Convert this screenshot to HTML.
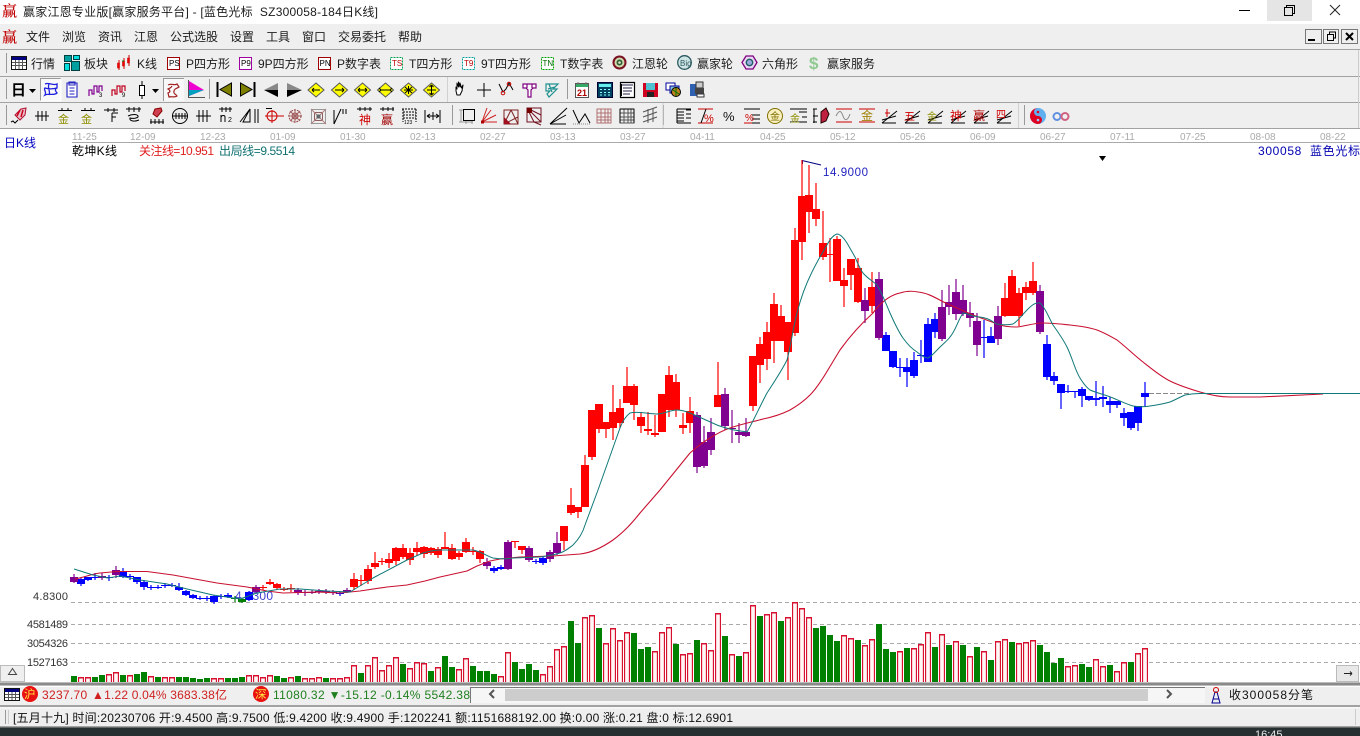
<!DOCTYPE html>
<html><head><meta charset="utf-8"><title>赢家江恩</title>
<style>
html,body{margin:0;padding:0;background:#fff;overflow:hidden}
svg{display:block}
text{font-family:"Liberation Sans","Noto Sans CJK SC",sans-serif;font-size:12px;fill:#222}
.m{fill:#1c1c1c}
.d{font-size:10px;fill:#aaa}
.y{font-size:11px;fill:#333}
.t{font-size:8px;fill:#000}
.l{font-family:"Noto Serif CJK SC",serif;font-size:15px;fill:#c00000;font-weight:600}
</style></head><body>
<svg width="1360" height="736" viewBox="0 0 1360 736" xmlns="http://www.w3.org/2000/svg">
<rect width="1360" height="736" fill="#fff"/>
<!-- title -->
<text x="2" y="16" class="l">赢</text>
<text x="23" y="16" class="m" textLength="355">赢家江恩专业版[赢家服务平台] - [蓝色光标&#160;&#160;SZ300058-184日K线]</text>
<rect x="1267" y="0" width="45" height="21" fill="#e5e5e5"/>
<path d="M1239 10.500H1250" stroke="#000" fill="none"/>
<path d="M1284.500 7.500h8v8h-8zM1286.500 7.500V5.500h8v8h-2" stroke="#000" fill="none"/>
<path d="M1330 5l10 10M1340 5l-10 10" stroke="#222" fill="none"/>
<!-- bars -->
<rect y="24" width="1360" height="105" fill="#efefef"/>
<path d="M0 49.500H1360M0 76.500H1360M0 102.500H1360M0 128.500H1360" stroke="#a2a2a2" fill="none"/>
<path d="M1358.500 50V128" stroke="#ccc"/>
<!-- menu -->
<text x="2" y="42" class="l">赢</text>
<text x="26" y="41" class="m">文件</text><text x="62" y="41" class="m">浏览</text><text x="98" y="41" class="m">资讯</text><text x="134" y="41" class="m">江恩</text><text x="170" y="41" class="m">公式选股</text><text x="230" y="41" class="m">设置</text><text x="266" y="41" class="m">工具</text><text x="302" y="41" class="m">窗口</text><text x="338" y="41" class="m">交易委托</text><text x="398" y="41" class="m">帮助</text>
<!-- mdi buttons -->
<g fill="#efefef" stroke="#777"><rect x="1305.500" y="29.500" width="16" height="14"/><rect x="1323.500" y="29.500" width="15" height="14"/><rect x="1341.500" y="29.500" width="16" height="14"/></g>
<path d="M1308 40h7" stroke="#000" stroke-width="2"/>
<path d="M1327.500 34.500h6v6h-6zM1329.500 34.500v-2.500h6v6h-2" stroke="#000" fill="none"/>
<path d="M1346 33l7 7M1353 33l-7 7" stroke="#000" stroke-width="2"/>
<!-- toolbar separators -->
<path d="M6.500 53V73M6.500 79V99M6.500 105V125M209.500 79V99M452.500 105V125M567.500 79V99M663.500 105V125M1024.500 105V125" stroke="#999"/>
<path d="M447.500 77V102M663 103V128M1018.500 103V128" stroke="#d0d0d0"/>
<!-- toolbar 1 -->
<rect x="11.500" y="56.500" width="15" height="13" fill="#fff" stroke="#111"/><rect x="12" y="57" width="14" height="3" fill="#000080"/>
<path d="M12 62.500H26M12 65.500H26M15.500 60V69M19 60V69M22.500 60V69" stroke="#555"/>
<text x="31" y="68" class="m">行情</text>
<g fill="#00a0a0" stroke="#004040"><rect x="64.500" y="55.500" width="7" height="6"/><rect x="73.500" y="55.500" width="6" height="4" fill="#00e0e0"/><rect x="64.500" y="63.500" width="5" height="7" fill="#00e0e0"/><rect x="71.500" y="61.500" width="8" height="9"/></g>
<text x="84" y="68" class="m">板块</text>
<path d="M119 60V70M124 58V69M129 55V66" stroke="#c00" fill="none"/><path d="M117.500 63h2v5h-2zM122.500 61h2v5h-2zM127.500 58h2v5h-2z" fill="#e00" stroke="#c00" stroke-width=".6"/><path d="M122 61h2" stroke="#080"/>
<text x="137" y="68" class="m">K线</text>
<rect x="167.500" y="57.500" width="12" height="12" fill="#fff" stroke="#a00000"/><text x="169" y="66" class="t">PS</text>
<text x="186" y="68" class="m">P四方形</text>
<rect x="239.500" y="57.500" width="12" height="12" fill="#fff" stroke="#a000a0"/><text x="241" y="66" class="t">P9</text>
<text x="258" y="68" class="m">9P四方形</text>
<rect x="318.500" y="57.500" width="12" height="12" fill="#fff" stroke="#a00000"/><text x="319.500" y="66" class="t">PN</text>
<text x="337" y="68" class="m">P数字表</text>
<rect x="390.500" y="57.500" width="12" height="12" fill="#fff" stroke="#00a050" stroke-dasharray="2 1"/><text x="392" y="66" class="t" style="fill:#b00">TS</text>
<text x="409" y="68" class="m">T四方形</text>
<rect x="462.500" y="57.500" width="12" height="12" fill="#fff" stroke="#00a0a0" stroke-dasharray="2 1"/><text x="464" y="66" class="t" style="fill:#b00">T9</text>
<text x="481" y="68" class="m">9T四方形</text>
<rect x="541.500" y="57.500" width="12" height="12" fill="#fff" stroke="#00a000" stroke-dasharray="2 1"/><text x="542.500" y="66" class="t" style="fill:#060">TN</text>
<text x="560" y="68" class="m">T数字表</text>
<circle cx="619.500" cy="62.500" r="7" fill="#7a1020"/><circle cx="619.500" cy="62.500" r="5" fill="#d0d8b0"/><circle cx="619.500" cy="62.500" r="3" fill="#306030"/><circle cx="619.500" cy="62.500" r="1.300" fill="#e0e0d0"/>
<text x="632" y="68" class="m">江恩轮</text>
<circle cx="684.500" cy="62.500" r="6.800" fill="#cfe4e4" stroke="#2a5a60" stroke-width="1.300"/><text x="680" y="66" style="font-size:8px;fill:#2a5a60">Big</text>
<text x="697" y="68" class="m">赢家轮</text>
<path d="M746 56h7l4 6.500-4 6.500h-7l-4-6.500z" fill="#e8d8f4" stroke="#800080" stroke-width="1.300"/><circle cx="749.500" cy="62.500" r="3.200" fill="#9ad" stroke="#206060" stroke-width="1.400"/>
<text x="762" y="68" class="m">六角形</text>
<text x="809" y="69" style="font-size:17px;font-weight:bold;fill:#8fc98f">$</text>
<text x="827" y="68" class="m">赢家服务</text>
<!-- toolbar 2 -->
<text x="11" y="95" style="font-size:15px;font-weight:bold;fill:#000">日</text>
<path d="M29 89h7l-3.500 4z" fill="#000"/>
<rect x="40" y="78" width="21" height="23" fill="#f8f8f8"/><path d="M40.500 101V78.500H61" stroke="#999" fill="none"/><path d="M61 78.500V101H40" stroke="#fff" fill="none"/>
<path d="M45 84c4-2 8 2 12 0v4c-3 1-1 4 0 5-3 3-8 0-12 2 2-3-2-6 0-7 3 1 8 1 12 0M49 84c-2 4 2 8 0 11" stroke="#2020e0" fill="none" stroke-width="1.300"/>
<path d="M67 83h10v14h-10zM69 82h6v3h-6zM69.500 88h5M69.500 91h5M69.500 94h5" stroke="#2020c0" fill="#fff" stroke-width="1.100"/>
<path d="M89 96v-6h3v4h2v-8h3v6h2v-6h3v5" stroke="#800090" fill="none" stroke-width="1.200"/><text x="99" y="97" style="font-size:6px;fill:#000">3</text>
<path d="M112 96v-6h3v4h2v-8h3v6h2v-6h3v5" stroke="#c00020" fill="none" stroke-width="1.200"/><text x="122" y="97" style="font-size:6px;fill:#000">9</text>
<path d="M142 81V99" stroke="#000"/><rect x="139.500" y="85.500" width="5" height="10" fill="#fff" stroke="#000"/>
<path d="M152 89h7l-3.500 4z" fill="#000"/>
<rect x="163" y="78" width="21" height="23" fill="#f8f8f8"/><path d="M163.500 101V78.500H184" stroke="#999" fill="none"/>
<path d="M168 85c4-2 6 1 9-1l2 3c-3 2-4 1-5 4s2 3 3 5c-3 2-5 0-8 1l-1-4c3-1 2-3 0-4 2-1 3-1 4-3" stroke="#a02020" fill="none" stroke-width="1.200"/>
<path d="M189 81V96L204 90z" fill="#f000d0"/><path d="M189 90L204 90 189 96z" fill="#00a0c0"/><path d="M188 97.500H205M188.500 80V98" stroke="#555" fill="none"/>
<!-- nav -->
<path d="M217.500 82V97" stroke="#000" stroke-width="2"/><path d="M231.500 83V96L220 89.500z" fill="#808000" stroke="#000"/>
<path d="M254.500 82V97" stroke="#000" stroke-width="2"/><path d="M240.500 83V96L252 89.500z" fill="#808000" stroke="#000"/>
<path d="M278 83V90L264 90z" fill="#888"/><path d="M278 97V90L264 90z" fill="#000"/>
<path d="M287 83V90L302 90z" fill="#888"/><path d="M287 97V90L302 90z" fill="#000"/>
<g fill="#ffff00" stroke="#555"><path d="M316 83l8 7-8 7-8-7z"/><path d="M339.500 83l8 7-8 7-8-7z"/><path d="M362.500 83l8 7-8 7-8-7z"/><path d="M385.500 83l8 7-8 7-8-7z"/><path d="M408.500 83l8 7-8 7-8-7z"/><path d="M431.500 83l8 7-8 7-8-7z"/></g>
<g stroke="#000" fill="none"><path d="M312 90h8M312 90l2-2M312 90l2 2"/><path d="M335 90h9M344 90l-2-2M344 90l-2 2"/><path d="M358 90h9M358 90l2-2M358 90l2 2M367 90l-2-2M367 90l-2 2"/><path d="M381 90h9M381 90l-2-2M381 90l-2 2M390 90l2-2M390 90l2 2"/><path d="M404 90h9M408.500 86v8M405 87l7 6M412 87l-7 6"/><path d="M427 90h9M431.500 85v10M431.500 85l-2 2M431.500 85l2 2M431.500 95l-2-2M431.500 95l2-2"/></g>
<path d="M456 91v-4l1 2v-6l1.500 4v-5l1.500 5v-4l1.500 5 1.500-3-1 6-2 4h-3z" fill="#fff" stroke="#000" stroke-linejoin="round"/>
<path d="M484 83V97M477 90H491" stroke="#000" fill="none"/>
<path d="M499 84l4 8 3-3 3-6 4 7" stroke="#000" fill="none"/><circle cx="503" cy="93" r="1.800" fill="none" stroke="#c00"/><circle cx="509" cy="84" r="1.800" fill="none" stroke="#c00"/>
<path d="M523 84h13v4h-3l-2 2v7h-3v-7l-2-2h-3zM527 84v4M532 84v4" fill="#fff" stroke="#800080" stroke-width="1.200"/>
<path d="M546 84h12l-5 5h4l-8 8-2-3 3-3h-4zM549 84l3 8M555 87l-7 2" fill="none" stroke="#209090" stroke-width="1.200"/>
<!-- tool -->
<rect x="575.500" y="83.500" width="13" height="14" fill="#fff" stroke="#555"/><rect x="576" y="84" width="12" height="3" fill="#3a6"/><path d="M578 82v3M586 82v3" stroke="#777"/><text x="577" y="96" style="font-size:9px;fill:#b00000;font-weight:bold">21</text>
<rect x="597.500" y="82.500" width="15" height="15" fill="#004060" stroke="#003"/><rect x="599" y="84" width="12" height="3" fill="#6ee"/><path d="M600 89.500h2M604 89.500h2M608 89.500h2M600 92.500h2M604 92.500h2M608 92.500h2M600 95h2M604 95h2M608 95h2" stroke="#8ff"/>
<path d="M620.500 82.500h14v15h-14z" fill="#fff" stroke="#000" stroke-width="1.200"/><path d="M622 85h11M623 88h9M623 91h9M623 94h7" stroke="#224" /><path d="M620 84h2v12h-2" fill="#000"/>
<rect x="643" y="83" width="15" height="14" fill="#d00020"/><rect x="646" y="83" width="9" height="7" fill="#50c0d0"/><rect x="647" y="92" width="7" height="5" fill="#222"/>
<rect x="666" y="83" width="9" height="7" fill="#fff" stroke="#009"/><rect x="670" y="86" width="9" height="7" fill="#80c0e0" stroke="#009"/><circle cx="676" cy="92" r="4.500" fill="#c08020" stroke="#000"/><path d="M673 90l6 4M676 88v8" stroke="#070"/>
<rect x="690" y="84" width="9" height="12" fill="#3060b0"/><rect x="696" y="82" width="7" height="6" fill="#ccc" stroke="#333"/><rect x="695" y="88" width="9" height="6" fill="#444"/><rect x="697" y="94" width="7" height="3" fill="#fff" stroke="#333"/>
<!-- toolbar 3 -->
<path d="M21 109l5-1-1 7-5 5-5-5z" fill="#e8c0c8" stroke="#b01030"/><path d="M20 110l-3 6M23 110l-2 7" stroke="#d00020" stroke-width="1.500"/><path d="M11 122l2-1 2 2 3-3" stroke="#000" fill="none"/>
<g stroke="#000" fill="none">
<path d="M35 116H49M38 111V121M42 111V121M46 111V121"/>
<path d="M58 110.500H72M62 108V111M68 108V111M81 110.500H95M85 108V111M91 108V111"/>
<path d="M104 110H118M108 108V112M114 108V112M112 113V122M112 113h6M112 117h4"/>
<path d="M126 109h15M129 107v5M134 107v5M139 107v5M128 116c4-2 9-2 10 0s-5 3-8 2c-1 3 4 4 9 2" />
<path d="M150 122H164M151 119v5M155 119v5M159 119v5M163 119v5"/>
<circle cx="180" cy="116" r="7.500"/><path d="M172 116H188M176 113v6M179 113v6M182 113v6M185 113v6"/>
<path d="M196 116H211M199 110V122M203 110V122M207 110V122"/>
<path d="M219 109H232M222 107V112M226 107V112M230 107V112M221 115v7M221 117c1-2 4-2 4 0v5"/>
<path d="M243 122L250 109 250 122zM240 122L250 109M255 109V123M258 109V123"/>
</g>
<text x="228" y="122" style="font-size:7px;fill:#000">2</text>
<text x="58" y="123" style="font-size:11px;fill:#909000">金</text><text x="81" y="123" style="font-size:11px;fill:#909000">金</text>
<path d="M155 109l6-1 1 3-5 6-4-3z" fill="#d04050" stroke="#800"/>
<g fill="none">
<circle cx="272" cy="116" r="5" stroke="#c00"/><path d="M265 116H284M272 110V123" stroke="#c00"/><path d="M266 108.500h6" stroke="#000"/>
<circle cx="295" cy="116" r="6" stroke="#a04040" stroke-dasharray="2 1"/><circle cx="295" cy="116" r="3" stroke="#a04040"/><path d="M288 116H302M295 109V123M290 111l10 10M300 111l-10 10" stroke="#a06060"/>
<rect x="311.500" y="109.500" width="14" height="14" stroke="#999"/><rect x="314.500" y="112.500" width="8" height="8" stroke="#906060"/><path d="M311 109l15 15M326 109l-15 15" stroke="#b08080"/><rect x="316.500" y="114.500" width="4" height="4" fill="#666"/>
<path d="M334 124V110M334 124L341 109M343 109v5M346 109v5" stroke="#000"/>
<path d="M357 109H372M360 107V111M365 107V111M370 107V111" stroke="#000"/>
<path d="M380 109H394M383 107V111M388 107V111M393 107V111" stroke="#000"/>
<path d="M402 109H417M403 109V122M416 109V122M403 112h13M403 115h13M403 118h13" stroke="#000" stroke-dasharray="2 1"/>
<path d="M425 110V123M440 110V123M427 116H439M427 116l3-2M427 116l3 2M439 116l-3-2M439 116l-3 2M433 112v8" stroke="#000"/>
</g>
<text x="359" y="124" style="font-size:12px;fill:#d00000">神</text>
<text x="381" y="124" style="font-size:12px;fill:#a00000">赢</text>
<text x="404" y="124" style="font-size:5px;fill:#000">123</text>
<!-- toolbar 3 after sep -->
<g fill="none">
<path d="M459 110h4M461 110V122M459 122h14" stroke="#999"/><rect x="463.500" y="109.500" width="11" height="11" stroke="#000"/><path d="M466 121v3M472 121v3" stroke="#999"/>
<path d="M482 122L487 108M482 122L491 110M482 122L496 115M482 122L497 122" stroke="#d02020"/><path d="M481 122h3" stroke="#a00" stroke-width="3"/>
<path d="M504 110h14v14h-14zM504 124l7-14M504 124l14-7M511 110l7 14" stroke="#802020"/><path d="M504 124v-7l7 7z" fill="#a01020"/>
<path d="M527 108h14v14h-14zM527 108l14 14M527 108l7 14M527 108l14 7M534 122l7 3" stroke="#701020"/><path d="M527 108h5v5h-5z" fill="#700"/>
<path d="M550 124L567 108M550 124L566 115M550 124H566" stroke="#000"/>
<path d="M573 110l6 13 6-9 5 9" stroke="#000"/><path d="M573 124h17" stroke="#888" stroke-dasharray="1 1"/>
<path d="M597 109h14v14h-14zM597 113h14M597 117h14M597 120h14M601 109v14M605 109v14M608 109v14" stroke="#b07070"/>
<path d="M620 109h14v14h-14zM620 113h14M620 117h14M620 120h14M624 109v14M628 109v14M631 109v14" stroke="#555"/><path d="M620 109h14M634 109v14M620 109V123" stroke="#000"/>
<path d="M643 112l14-5M643 117l14-5M643 122l14-5M648 109v14M653 108v14" stroke="#555"/>
<path d="M677 109h14M677 109V123M677 123h14M677 112h7M677 115h7M677 118h7M677 121h7M686 110h5M686 114h5M686 118h5" stroke="#000"/>
<path d="M698 109h15M698 123h15" stroke="#c00"/><path d="M701 123L706 109" stroke="#000"/>
<path d="M744 109h16M744 123h16M752 115h8M752 119h8" stroke="#000"/><path d="M744 123h8" stroke="#c00"/>
<circle cx="775" cy="116" r="7.500" stroke="#807000" fill="#f8f0c0"/>
<path d="M790 109h17M790 122h17" stroke="#000"/><path d="M799 112h8M802 117h5" stroke="#000"/>
<path d="M813 116h5M814 109v14M813 109h4M813 122h4" stroke="#000"/><path d="M821 123V112l5-4 3 6-3 7z" fill="#c02040" stroke="#200"/>
<path d="M836 109h16M836 122h16" stroke="#c00"/><path d="M836 116c3-6 5-6 7 0s5 4 7-2" stroke="#888"/>
<path d="M859 109h16M859 122h16" stroke="#c00"/>
<path d="M882 123L897 111M882 123H896M882 120L896 116" stroke="#000"/><path d="M887 109v8M885 113h5" stroke="#c00"/>
<path d="M928 123L943 111M928 123H942M928 120L942 116" stroke="#000"/>
<path d="M951 123L966 111M951 123H965M951 120L965 116" stroke="#000"/>
<path d="M974 123L989 111M974 123H988M974 120L988 116" stroke="#000"/>
<path d="M997 123L1012 111M997 123H1011M997 120L1011 116" stroke="#000"/>
<path d="M905 123L920 111M905 123H919M905 120L919 116" stroke="#000"/>
</g>
<text x="723" y="121" style="font-size:13px;fill:#111">%</text>
<text x="704" y="122" style="font-size:11px;fill:#c00">%</text>
<text x="745" y="121" style="font-size:10px;fill:#c00">%</text>
<text x="770" y="120" style="font-size:10px;fill:#807000">金</text>
<text x="790" y="122" style="font-size:10px;fill:#909000">金</text>
<text x="861" y="120" style="font-size:12px;fill:#a08000">金</text>
<text x="904" y="120" style="font-size:11px;fill:#d00000">五</text>
<text x="927" y="120" style="font-size:10px;fill:#909000">金</text>
<text x="950" y="120" style="font-size:12px;fill:#d00000">神</text>
<text x="973" y="120" style="font-size:12px;fill:#b00000">赢</text>
<text x="996" y="118" style="font-size:10px;fill:#d00000">四</text>
<circle cx="1038" cy="116" r="8" fill="#60b0f0"/><path d="M1038 108a8 8 0 0 0 0 16a4 4 0 0 0 0-8a4 4 0 0 1 0-8z" fill="#e00020"/><circle cx="1038" cy="112" r="1.300" fill="#e00020"/><circle cx="1038" cy="120" r="1.300" fill="#9cf"/>
<circle cx="1057" cy="116.500" r="3.500" fill="none" stroke="#6090e0" stroke-width="2"/><circle cx="1065" cy="116.500" r="3.500" fill="none" stroke="#d06080" stroke-width="2"/>
<!-- axis -->
<path d="M72 142.500H1360" stroke="#aaa"/>
<g class="d"><text class="d" x="72" y="140">11-25</text><text class="d" x="130" y="140">12-09</text><text class="d" x="200" y="140">12-23</text><text class="d" x="270" y="140">01-09</text><text class="d" x="340" y="140">01-30</text><text class="d" x="410" y="140">02-13</text><text class="d" x="480" y="140">02-27</text><text class="d" x="550" y="140">03-13</text><text class="d" x="620" y="140">03-27</text><text class="d" x="690" y="140">04-11</text><text class="d" x="760" y="140">04-25</text><text class="d" x="830" y="140">05-12</text><text class="d" x="900" y="140">05-26</text><text class="d" x="970" y="140">06-09</text><text class="d" x="1040" y="140">06-27</text><text class="d" x="1110" y="140">07-11</text><text class="d" x="1180" y="140">07-25</text><text class="d" x="1250" y="140">08-08</text><text class="d" x="1320" y="140">08-22</text></g>
<text x="4" y="147" style="fill:#0000c0" textLength="32">日K线</text>
<text x="72" y="155" style="fill:#000" textLength="45">乾坤K线</text>
<text x="139" y="155" style="fill:#e02020" textLength="75">关注线=10.951</text>
<text x="219" y="155" style="fill:#107070" textLength="76">出局线=9.5514</text>
<text x="1258" y="155" style="fill:#0000b0" textLength="102">300058&#160;&#160;蓝色光标</text>
<path d="M1099 156h7l-3.500 5z" fill="#000"/>
<!-- y grid -->
<path d="M71 602.500H1360M71 624.500H1360M71 643.500H1360M71 662.500H1360" stroke="#aaa" stroke-dasharray="4 3" fill="none"/>
<text class="y" x="33" y="600" textLength="35">4.8300</text>
<text class="y" x="27" y="628" textLength="41">4581489</text>
<text class="y" x="27" y="647" textLength="41">3054326</text>
<text class="y" x="27" y="666" textLength="41">1527163</text>
<text x="235" y="600" style="fill:#4040d0" textLength="38">4.4300</text>
<text x="823" y="176" style="font-size:11.500px;fill:#2020c0" textLength="45">14.9000</text>
<path d="M802 160.500L821 165" stroke="#000080" fill="none"/><path d="M802.500 160V164" stroke="#000080"/>
<!-- volumes -->
<g fill="none">
<path stroke="#008000" stroke-width="6" d="M74 676V682M95 677V682M102 675V682M123 675V682M137 674V682M144 672V682M158 677V682M179 677V682M186 677V682M193 678V682M200 679V682M207 678V682M228 678V682M235 678V682M242 677V682M277 676V682M284 678V682M298 676V682M326 678V682M361 673V682M403 664V682M431 671V682M445 656V682M452 667V682M473 666V682M480 671V682M487 671V682M494 674V682M515 662V682M522 669V682M529 664V682M536 670V682M571 621V682M578 643V682M599 628V682M634 633V682M641 649V682M648 647V682M676 644V682M697 640V682M725 636V682M739 656V682M760 616V682M781 621V682M816 628V682M823 626V682M830 635V682M837 641V682M858 640V682M879 624V682M886 649V682M893 652V682M907 648V682M935 647V682M949 645V682M963 645V682M977 647V682M991 660V682M1012 642V682M1040 645V682M1047 652V682M1054 663V682M1061 658V682M1082 664V682M1089 667V682M1110 665V682M1131 662V682"/>
<path id="rv" stroke="#d81030" stroke-width="6" d="M81 677V682M88 677V682M109 674V682M116 672V682M130 675V682M151 676V682M165 677V682M172 677V682M214 678V682M221 678V682M249 675V682M256 675V682M263 677V682M270 675V682M291 677V682M305 678V682M312 678V682M319 677V682M333 678V682M340 678V682M347 677V682M354 665V682M368 665V682M375 657V682M382 670V682M389 665V682M396 657V682M410 668V682M417 662V682M424 663V682M438 667V682M459 669V682M466 658V682M501 676V682M508 652V682M543 674V682M550 666V682M557 649V682M564 646V682M585 617V682M592 615V682M606 643V682M613 628V682M620 640V682M627 632V682M655 651V682M662 632V682M669 627V682M683 654V682M690 653V682M704 643V682M711 650V682M718 613V682M732 654V682M746 652V682M753 605V682M767 614V682M774 612V682M788 617V682M795 602V682M802 608V682M809 617V682M844 635V682M851 638V682M865 645V682M872 639V682M900 651V682M914 648V682M921 644V682M928 632V682M942 634V682M956 641V682M970 656V682M984 651V682M998 641V682M1005 639V682M1019 643V682M1026 642V682M1033 640V682M1068 666V682M1075 665V682M1096 659V682M1103 666V682M1117 671V682M1124 662V682M1138 653V682M1145 648V682"/>
<path stroke="#fff6f6" stroke-width="3.700" transform="translate(0 1.500)" d="M81 677V682M88 677V682M109 674V682M116 672V682M130 675V682M151 676V682M165 677V682M172 677V682M214 678V682M221 678V682M249 675V682M256 675V682M263 677V682M270 675V682M291 677V682M305 678V682M312 678V682M319 677V682M333 678V682M340 678V682M347 677V682M354 665V682M368 665V682M375 657V682M382 670V682M389 665V682M396 657V682M410 668V682M417 662V682M424 663V682M438 667V682M459 669V682M466 658V682M501 676V682M508 652V682M543 674V682M550 666V682M557 649V682M564 646V682M585 617V682M592 615V682M606 643V682M613 628V682M620 640V682M627 632V682M655 651V682M662 632V682M669 627V682M683 654V682M690 653V682M704 643V682M711 650V682M718 613V682M732 654V682M746 652V682M753 605V682M767 614V682M774 612V682M788 617V682M795 602V682M802 608V682M809 617V682M844 635V682M851 638V682M865 645V682M872 639V682M900 651V682M914 648V682M921 644V682M928 632V682M942 634V682M956 641V682M970 656V682M984 651V682M998 641V682M1005 639V682M1019 643V682M1026 642V682M1033 640V682M1068 666V682M1075 665V682M1096 659V682M1103 666V682M1117 671V682M1124 662V682M1138 653V682M1145 648V682"/>
</g>
<!-- candles -->
<g fill="none">
<path stroke="#ff0000" stroke-width="1.200" d="M263 585V590M270 579V585M277 583V589M284 587V591M291 584V592M354 573V590M361 575V586M368 565V584M375 552V569M382 558V565M389 553V568M396 547V565M403 544V559M410 548V565M417 542V556M424 546V558M431 547V555M438 547V558M445 532V549M452 544V560M459 551V560M466 538V553M473 547V555M480 550V563M515 541V548M522 546V554M564 526V550M571 488V515M578 507V518M585 455V507M592 410V460M599 404V433M606 422V438M613 385V440M620 399V428M627 367V403M634 384V420M641 412V433M648 412V435M655 415V437M662 394V432M669 366V417M676 374V417M683 413V434M690 397V433M718 362V407M753 356V411M760 337V383M767 322V370M774 293V363M781 305V341M788 322V380M795 228V336M802 160V260M809 165V233M816 183V226M823 211V260M830 238V282M837 236V281M844 268V307M851 259V290M858 258V303M872 272V313M1005 283V317M1012 270V316M1019 288V326M1026 282V300M1033 262V295"/>
<path stroke="#ff0000" stroke-width="8" d="M263 587V588M270 582V584M277 584V588M284 589V590M291 588V589M354 579V587M361 580V581M368 569V581M375 563V567M382 561V562M389 559V563M396 548V561M403 548V557M410 553V560M417 548V552M424 547V554M431 548V553M438 549V555M445 547V549M452 548V559M459 553V557M466 542V552M473 551V552M480 551V559M515 541V542M522 546V550M564 526V541M571 505V513M578 507V512M585 465V507M592 410V457M599 404V429M606 422V429M613 412V428M620 408V423M627 386V403M634 386V405M641 417V426M648 429V431M655 433V435M662 394V432M669 375V410M676 382V410M683 425V428M690 411V423M718 395V407M753 356V406M760 344V365M767 332V359M774 304V341M781 316V341M788 322V352M795 240V333M802 196V242M809 195V212M816 209V219M823 243V257M830 254V255M837 239V281M844 280V286M851 259V275M858 268V302M872 287V306M1005 298V316M1012 276V316M1019 293V316M1026 287V293M1033 281V293"/>
<path stroke="#0000ff" stroke-width="1.200" d="M81 578V586M88 577V581M95 573V580M109 575V581M123 568V578M130 574V580M137 577V584M144 580V590M151 585V590M158 585V589M165 583V588M172 583V587M179 583V591M186 590V596M193 594V599M200 596V600M207 596V601M214 595V604M221 594V599M228 593V598M249 591V601M340 592V596M494 566V573M501 565V570M536 559V564M543 557V565M886 332V351M893 351V368M900 358V377M907 358V387M914 352V378M921 340V363M928 318V362M935 313V338M984 320V358M991 327V343M1047 335V380M1054 372V385M1061 384V409M1068 385V393M1075 391V398M1082 387V407M1089 396V401M1096 381V406M1103 386V407M1110 397V413M1117 401V408M1124 408V426M1131 412V430M1138 406V431M1145 382V407"/>
<path stroke="#0000ff" stroke-width="8" d="M81 579V584M88 577V580M95 577V578M109 577V578M123 572V577M130 576V577M137 577V582M144 582V587M151 587V588M158 587V588M165 585V586M172 585V586M179 587V590M186 591V595M193 595V598M200 598V599M207 598V599M214 596V602M221 596V597M228 595V597M249 592V600M340 593V594M494 568V571M501 567V569M536 561V562M543 558V563M886 335V351M893 351V367M900 367V368M907 367V372M914 360V376M921 355V356M928 324V362M935 319V332M984 337V338M991 336V343M1047 344V377M1054 376V381M1061 384V393M1068 391V392M1075 391V392M1082 389V396M1089 396V400M1096 398V400M1103 397V399M1110 401V405M1117 401V405M1124 413V418M1131 412V428M1138 406V423M1145 393V397"/>
<path stroke="#800090" stroke-width="1.200" d="M74 574V583M102 573V580M116 566V578M256 585V594M298 588V595M305 590V596M312 590V594M319 589V594M326 589V594M333 590V595M347 588V593M487 558V569M508 540V570M529 546V562M550 550V562M557 532V555M697 412V473M704 426V468M711 418V455M725 388V430M732 410V443M739 423V443M746 418V437M865 288V323M879 272V340M942 290V341M949 285V315M956 279V320M963 285V316M970 302V327M977 313V356M998 306V345M1040 285V334"/>
<path stroke="#800090" stroke-width="8" d="M74 577V582M102 576V578M116 570V575M256 587V592M298 590V593M305 592V593M312 592V593M319 591V592.500M326 591V592.500M333 592V593M347 590V592M487 562V566M508 542V569M529 548V560M550 552V559M557 543V553M697 415V467M704 442V466M711 432V450M725 394V426M732 428V429M739 432V435M746 432V436M865 300V311M879 279V338M942 307V339M949 302V307M956 292V314M963 300V314M970 313V318M977 321V345M998 316V339M1040 291V332"/>
<path stroke="#008000" stroke-width="1.200" d="M235 596V602M242 598V603"/>
<path stroke="#008000" stroke-width="8" d="M235 598V599M242 599V602"/>
<path d="M1149 393.500H1190" stroke="#888" stroke-dasharray="5 2"/>
</g>
<!-- MA lines -->
<path fill="none" stroke="#c81030" stroke-width="1.100" stroke-linejoin="round" d="M75 579C85 577 92 574 100 573L117 571.500L147 571.500L173 575L217 583L247 587L267 591L283 593L317 592L340 593L360 591L387 587L407 585L425 581L440 577L467 571L477 566L490 561L500 559L520 557L553 556L580 554C590 553 600 549 613 540C625 531 632 523 640 513L660 490L690 453C698 446 703 442 710 438C718 433 724 430 730 428C742 424 752 422 763 419C773 417 782 414 790 410C797 406 804 401 810 395C820 385 830 366 840 350C850 336 862 323 873 313C880 303 890 295 900 293C906 291 913 291 918 292C930 293 940 301 950 305L973 315L1000 325C1006 327 1012 327 1017 327C1026 326 1034 323 1043 323C1052 323 1060 324 1070 325C1080 326 1088 327 1097 330C1105 333 1110 336 1117 340C1126 347 1134 355 1143 362C1152 369 1160 376 1170 381C1180 386 1190 389 1200 392C1210 395 1220 397 1230 397L1260 397L1323 394"/>
<path fill="none" stroke="#107878" stroke-width="1" stroke-linejoin="round" d="M74 569L93 575L108 578L120 576L140 580L167 584L187 589L213 595L240 599L257 593L280 589L300 589L327 591L350 592L373 578L407 560L423 553C430 551 435 550 440 550L473 550C482 552 487 556 493 558C500 559 507 559 513 558L540 557C548 556 554 555 560 553C566 551 569 548 573 545C580 538 583 532 585 525L598 490L620 428C623 420 626 416 630 413C638 411 648 414 657 414C664 414 670 410 677 410C684 410 690 413 697 416L717 425C722 427 726 428 730 429C737 431 742 431 747 432C754 420 760 406 767 393C774 382 781 372 787 360C791 345 793 328 797 313C801 297 806 284 812 272C815 266 817 262 820 257C826 248 830 236 837 234C840 234 844 238 847 243L855 257C858 264 860 269 863 273C868 279 873 281 877 285C882 293 886 304 890 313C894 322 898 331 903 338C908 345 912 349 917 352C921 355 924 358 928 358C932 356 936 351 940 347C944 343 947 341 950 337C956 330 958 320 963 313C966 313 970 315 973 316C978 317 983 317 988 319C991 320 994 323 997 324C1002 325 1008 325 1013 324C1018 321 1022 315 1027 310C1031 306 1035 302 1040 303C1045 307 1049 318 1053 325C1058 332 1063 339 1067 347C1072 357 1075 370 1080 378C1083 383 1086 387 1090 390C1097 393 1106 395 1113 398C1120 401 1126 404 1133 406C1139 407 1144 407 1150 406C1157 405 1163 404 1170 402C1175 400 1180 397 1185 395C1190 394 1195 393.500 1200 393.500H1360"/>
<!-- bottom buttons -->
<rect x="0.500" y="665.500" width="24" height="16" fill="#efefef" stroke="#bbb"/><path d="M12.500 668.500l4 6h-8z" fill="none" stroke="#444"/>
<rect x="1336.500" y="665.500" width="22" height="16" fill="#e8e8e8" stroke="#bbb"/><path d="M1344 673.500h8M1352 673.500l-2-2M1352 673.500l-2 2" stroke="#222" fill="none"/>
<!-- status -->
<rect y="682" width="1360" height="54" fill="#efefef"/>
<rect y="682.500" width="1360" height="3" fill="#8a8a8a"/>
<rect y="686" width="1360" height="1" fill="#fff"/>
<rect x="470" y="687" width="735" height="16" fill="#f6f6f6"/><path d="M470.500 703V687.500H1205" stroke="#777" fill="none"/>
<rect x="505" y="689" width="643" height="12" fill="#cdcdcd"/>
<path d="M494 690l-4 4 4 4" stroke="#555" stroke-width="2" fill="none"/><path d="M1167 690l4 4-4 4" stroke="#555" stroke-width="2" fill="none"/>
<rect y="705" width="1360" height="2" fill="#a2a2a2"/>
<rect y="707.500" width="1360" height=".8" fill="#fff"/>
<rect y="726" width="1360" height="1.500" fill="#a2a2a2"/>
<rect y="727.500" width="1360" height="9" fill="#263030"/>
<text x="1255" y="738" style="font-size:11px;fill:#e8e8e8">16:45</text>
<path d="M1355.500 709V725" stroke="#ccc"/>
<!-- status row 1 -->
<rect x="4.500" y="688.500" width="15" height="12" fill="#fff" stroke="#111"/><rect x="5" y="689" width="14" height="3" fill="#000080"/><path d="M5 694.500H19M5 697.500H19M8.500 692V700M12 692V700M15.500 692V700" stroke="#555"/>
<circle cx="30" cy="694" r="8" fill="#e81010"/><text x="24" y="698" style="font-size:11.500px;fill:#ffe040">沪</text>
<text x="42" y="699" style="fill:#d02020;letter-spacing:.3px">3237.70</text>
<text x="92" y="699" style="fill:#d02020" textLength="135">▲1.22 0.04% 3683.38亿</text>
<circle cx="261" cy="694" r="8" fill="#e81010"/><text x="255" y="698" style="font-size:11.500px;fill:#ffe040">深</text>
<text x="273" y="699" style="fill:#208020" textLength="197">11080.32 ▼-15.12 -0.14% 5542.38</text>
<path d="M1212 703h8l-3-11h-2zM1213.500 699h5" stroke="#000090" fill="none"/><circle cx="1216" cy="690" r="2.500" fill="none" stroke="#d00000"/>
<text x="1229" y="699" style="fill:#111" textLength="84">收300058分笔</text>
<!-- status row 2 -->
<path d="M5.500 710V724" stroke="#999"/><path d="M8.500 710V724" stroke="#ccc"/>
<text x="13" y="722" style="fill:#111" textLength="720">[五月十九] 时间:20230706 开:9.4500 高:9.7500 低:9.4200 收:9.4900 手:1202241 额:1151688192.00 换:0.00 涨:0.21 盘:0 标:12.6901</text>
</svg>
</body></html>
